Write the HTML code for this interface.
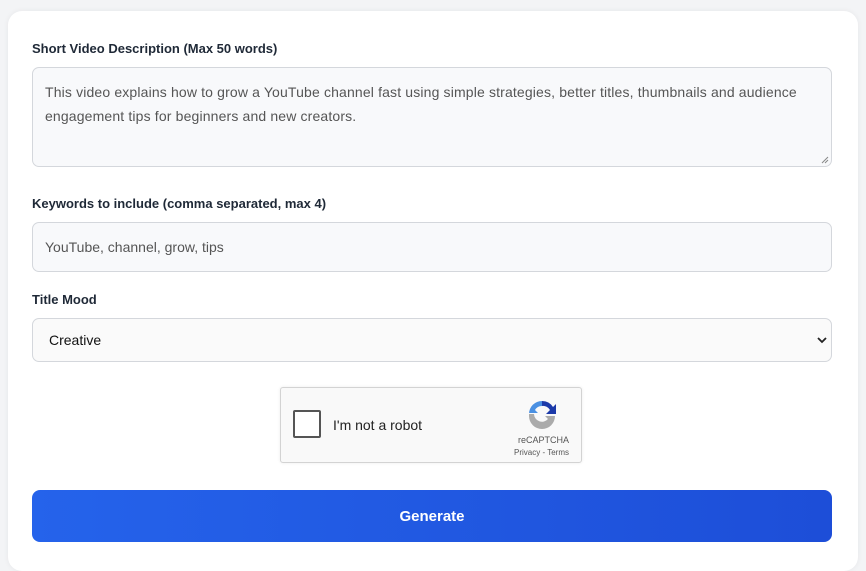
<!DOCTYPE html>
<html><head><style>
body{margin:0;width:866px;height:552px;background:#f3f4f6;font-family:"Liberation Sans",sans-serif;overflow:hidden;position:relative}
.card{position:absolute;left:8px;top:11px;width:850px;height:560px;background:#fff;border-radius:14px;box-shadow:0 0 6px rgba(0,0,0,.06)}
.lbl{position:absolute;left:32px;font-size:13px;font-weight:bold;color:#1f2937}
.box{position:absolute;left:32px;width:800px;background:#f8f9fb;border:1px solid #d4d7dc;border-radius:7px;box-sizing:border-box;color:#555;font-size:14px}
</style></head><body>
<div class="card"></div>
<div class="lbl" style="top:41px">Short Video Description (Max 50 words)</div>
<div class="box" style="top:67px;height:100px;padding:12px 12px;line-height:24px;letter-spacing:0.15px">This video explains how to grow a YouTube channel fast using simple strategies, better titles, thumbnails and audience engagement tips for beginners and new creators.
<svg style="position:absolute;right:2px;bottom:2px" width="8" height="8"><path d="M1 7L7 1M4 7L7 4" stroke="#888"/></svg></div>
<div class="lbl" style="top:196px">Keywords to include (comma separated, max 4)</div>
<div class="box" style="top:222px;height:50px;padding:0 12px;line-height:48px">YouTube, channel, grow, tips</div>
<div class="lbl" style="top:292px">Title Mood</div>
<div class="box" style="top:318px;height:44px;padding:0 16px;line-height:42px;color:#111;background:#fafafa">Creative
<svg style="position:absolute;right:4px;top:17px" width="10" height="8"><path d="M1 2L5 6L9 2" stroke="#222" stroke-width="1.8" fill="none"/></svg></div>
<div style="position:absolute;left:280px;top:387px;width:302px;height:76px;background:#f9f9f9;border:1px solid #d3d3d3;border-radius:3px;box-sizing:border-box;box-shadow:0 0 3px rgba(0,0,0,.08)">
<div style="position:absolute;left:12px;top:22px;width:24px;height:24px;border:2px solid #555;border-radius:2px;background:#fff"></div>
<div style="position:absolute;left:52px;top:29px;font-size:14px;color:#222">I'm not a robot</div>
<svg style="position:absolute;left:245px;top:10px" width="32" height="32" viewBox="0 0 32 32"><path d="M16 3a13 13 0 0 1 11 6l3-3v10H20l4-4a8 8 0 0 0-8-4z" fill="#1c3aa9"/><path d="M3 16A13 13 0 0 1 16 3v5a8 8 0 0 0-7 4l3 3H3z" fill="#4a90e2"/><path d="M3 16h5a8 8 0 0 0 14 5l-3-3h10v0a13 13 0 0 1-26 0z" fill="#ababab"/></svg>
<div style="position:absolute;right:12px;top:47px;font-size:9px;color:#555">reCAPTCHA</div>
<div style="position:absolute;right:12px;top:60px;font-size:8px;color:#555">Privacy - Terms</div>
</div>
<div style="position:absolute;left:32px;top:490px;width:800px;height:52px;border-radius:8px;background:linear-gradient(90deg,#2563eb,#1d4ed8);color:#fff;font-weight:bold;font-size:15px;text-align:center;line-height:54px">Generate</div>
</body></html>
